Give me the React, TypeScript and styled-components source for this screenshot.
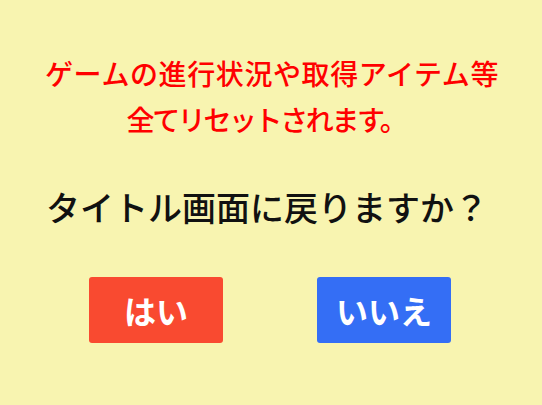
import React from 'react'
import styled, { createGlobalStyle } from 'styled-components'

const GlobalStyle = createGlobalStyle`
    html, body {
        margin: 0;
        padding: 0;
        background-color: #f8f4b0;
    }
    body {
        font-family: "Noto Sans CJK JP", "Noto Sans", sans-serif;
    }
`

const Screen = styled.section`
    width: 542px;
    height: 405px;
    display: flex;
    flex-direction: column;
    align-items: center;
    background-color: #f8f4b0;
`

const Warning = styled.div`
    margin-top: 50px;
    color: #ff0000;
    font-size: 28px;
    line-height: 46px;
    text-align: center;
    font-weight: 500;
`

const WarningLine = styled.div<{ shift?: number; spacing?: number }>`
    margin-right: ${({ shift }) => (shift ? `${shift}px` : '0')};
    letter-spacing: ${({ spacing }) => (spacing ? `${spacing}px` : '0')};
    white-space: nowrap;
`

const Question = styled.div`
    margin-top: 41px;
    color: #111111;
    font-size: 34px;
    line-height: 48px;
    font-weight: 500;
    margin-right: 8px;
    white-space: nowrap;
`

const ButtonRow = styled.div`
    margin-top: 46px;
    display: flex;
    gap: 94px;
    margin-right: 2px;
`

const Button = styled.button<{ color: string }>`
    width: 134px;
    height: 66px;
    border: none;
    border-radius: 3px;
    background-color: ${({ color }) => color};
    color: #ffffff;
    font-family: "Noto Sans CJK JP", "Noto Sans", sans-serif;
    font-size: 32px;
    font-weight: 700;
    display: flex;
    align-items: center;
    justify-content: center;
    padding: 0;
    cursor: pointer;
`

const App = () => {
    return (
        <Screen>
            <GlobalStyle />
            <Warning>
                <WarningLine spacing={0.6} shift={-2}>ゲームの進行状況や取得アイテム等</WarningLine>
                <WarningLine shift={10} spacing={-2.4}>全てリセットされます。</WarningLine>
            </Warning>
            <Question>タイトル画面に戻りますか？</Question>
            <ButtonRow>
                <Button color='#f94a30'>はい</Button>
                <Button color='#346ef5'>いいえ</Button>
            </ButtonRow>
        </Screen>
    )
}

export default App
